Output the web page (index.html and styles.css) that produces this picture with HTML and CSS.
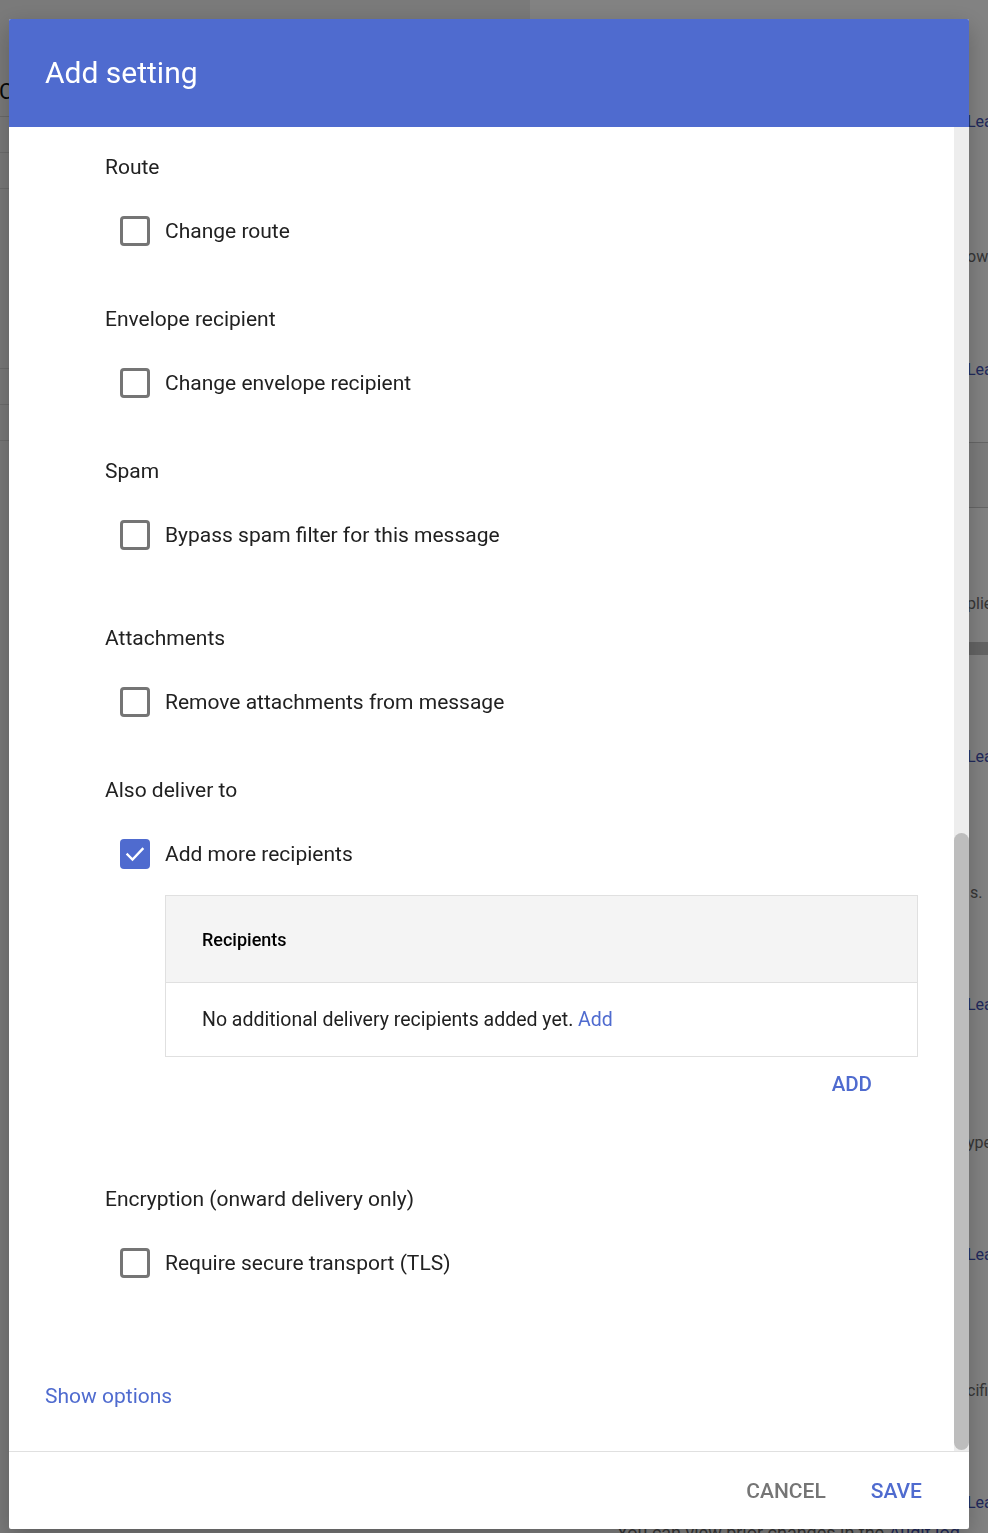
FILE: index.html
```html
<!DOCTYPE html>
<html lang="en">
<head>
<meta charset="utf-8">
<title>Add setting</title>
<link rel="stylesheet" href="styles.css">
</head>
<body>
<div class="page">
  <div class="page-left">
    <div class="page-left-head"><span class="page-left-title">Compliance</span></div>
    <div class="page-left-row"></div>
    <div class="page-left-row"></div>
    <div class="page-left-row tall"></div>
    <div class="page-left-row"></div>
    <div class="page-left-row"></div>
  </div>
  <div class="page-right">
    <span class="bg-text link m112">Learn more</span>
    <span class="bg-text m115">owed</span>
    <span class="bg-text link m93">Learn more</span>
    <div class="bg-band"></div>
    <span class="bg-text m86">plies</span>
    <div class="bg-bar"></div>
    <span class="bg-text link m92">Learn more</span>
    <span class="bg-text m116 shift">s.</span>
    <span class="bg-text link m92">Learn more</span>
    <span class="bg-text m118">ype</span>
    <span class="bg-text link m92">Learn more</span>
    <span class="bg-text m116">cific</span>
    <span class="bg-text link m92">Learn more</span>
  </div>
  <div class="page-foot">You can view prior changes in the <span class="bg-link">Audit log</span></div>
</div>

<div class="scrim"></div>

<div class="dialog" role="dialog" aria-labelledby="dlg-title">
  <header class="dialog-head">
    <h1 id="dlg-title" class="dialog-title">Add setting</h1>
  </header>

  <div class="dialog-body">
    <div class="dialog-content">
      <section class="group">
        <div class="group-label">Route</div>
        <label class="check-row">
          <span class="box"></span>
          <span class="check-text">Change route</span>
        </label>
      </section>

      <section class="group">
        <div class="group-label">Envelope recipient</div>
        <label class="check-row">
          <span class="box"></span>
          <span class="check-text">Change envelope recipient</span>
        </label>
      </section>

      <section class="group group-wide">
        <div class="group-label">Spam</div>
        <label class="check-row">
          <span class="box"></span>
          <span class="check-text">Bypass spam filter for this message</span>
        </label>
      </section>

      <section class="group">
        <div class="group-label">Attachments</div>
        <label class="check-row">
          <span class="box"></span>
          <span class="check-text">Remove attachments from message</span>
        </label>
      </section>

      <section class="group group-deliver">
        <div class="group-label">Also deliver to</div>
        <label class="check-row">
          <span class="box checked">
            <svg viewBox="0 0 30 30" width="30" height="30" aria-hidden="true"><path d="M7.5 15.5l5 5 10-10.5" fill="none" stroke="#fff" stroke-width="2.4" stroke-linecap="square"/></svg>
          </span>
          <span class="check-text">Add more recipients</span>
        </label>
        <div class="recip-table">
          <div class="recip-head">Recipients</div>
          <div class="recip-body">No additional delivery recipients added yet. <a class="link-inline" href="#">Add</a></div>
        </div>
        <div class="add-row"><button class="text-btn" type="button">ADD</button></div>
      </section>

      <section class="group">
        <div class="group-label">Encryption (onward delivery only)</div>
        <label class="check-row">
          <span class="box"></span>
          <span class="check-text">Require secure transport (TLS)</span>
        </label>
      </section>

      <a class="show-options" href="#">Show options</a>
    </div>
    <div class="scrollbar"><div class="thumb"></div></div>
  </div>

  <footer class="dialog-foot">
    <button class="foot-btn cancel" type="button">CANCEL</button>
    <button class="foot-btn save" type="button">SAVE</button>
  </footer>
</div>
</body>
</html>
```

FILE: styles.css
```css
* { box-sizing: border-box; }

html, body {
  margin: 0;
  padding: 0;
  height: 100%;
  overflow: hidden;
}

body {
  font-family: Roboto, "Liberation Sans", Arial, sans-serif;
  color: #212121;
  background: #ffffff;
}

/* ---------- background page (dimmed) ---------- */
.page {
  display: flex;
  height: 1533px;
  position: relative;
}

.page-left {
  flex: 0 0 530px;
  background: #efefef;
  display: flex;
  flex-direction: column;
}

.page-left-head {
  height: 117px;
  display: flex;
  align-items: center;
  padding-top: 67px;
  border-bottom: 1px solid #cfcfcf;
}

.page-left-title {
  font-size: 22px;
  color: #111;
  margin-left: -1px;
}

.page-left-row {
  height: 36px;
  border-bottom: 1px solid #d6d6d6;
}
.page-left-row.tall { height: 180px; }

.page-right {
  flex: 1;
  min-width: 0;
  overflow: hidden;
  display: flex;
  flex-direction: column;
  padding-left: 437px;
  background: #ffffff;
}

.bg-text {
  display: block;
  height: 20px;
  line-height: 20px;
  font-size: 16px;
  color: #6a6a6a;
  white-space: nowrap;
}
.bg-text.link { color: #3f51b5; }
.bg-text.shift { padding-left: 3px; }

.m112 { margin-top: 112px; }
.m115 { margin-top: 115px; }
.m93 { margin-top: 93px; }
.m86 { margin-top: 86px; }
.m92 { margin-top: 92px; }
.m116 { margin-top: 116px; }
.m118 { margin-top: 118px; }

.bg-band {
  margin-top: 62px;
  height: 66px;
  border-top: 1px solid #c8c8c8;
  border-bottom: 1px solid #c8c8c8;
  background: #f3f3f3;
}

.bg-bar {
  margin-top: 28px;
  height: 13px;
  background: #c4c4c4;
}

.page-foot {
  position: absolute;
  left: 617px;
  top: 1522px;
  font-size: 18px;
  color: #6a6a6a;
  white-space: nowrap;
}
.bg-link { color: #3f51b5; }

/* ---------- scrim + dialog ---------- */
.scrim {
  position: fixed;
  inset: 0;
  background: rgba(0, 0, 0, 0.49);
}

.dialog {
  position: fixed;
  left: 9px;
  top: 19px;
  width: 960px;
  height: 1510px;
  background: #ffffff;
  border-radius: 2px;
  box-shadow: 0 8px 24px rgba(0, 0, 0, 0.25);
  display: flex;
  flex-direction: column;
  overflow: hidden;
}

.dialog-head {
  flex: 0 0 108px;
  background: #4f6bcf;
  display: flex;
  align-items: center;
  padding-left: 36px;
  padding-bottom: 2px;
}

.dialog-title {
  margin: 0;
  font-size: 30px;
  font-weight: 400;
  color: #ffffff;
}

.dialog-body {
  flex: 1;
  display: flex;
  min-height: 0;
}

.dialog-content {
  flex: 1;
  padding: 28px 36px 0 36px;
  display: flex;
  flex-direction: column;
  align-items: stretch;
}

.scrollbar {
  width: 15px;
  background: #ededed;
  display: flex;
  flex-direction: column;
  justify-content: flex-end;
}

.thumb {
  height: 617px;
  margin-bottom: 1px;
  background: #bdbdbd;
  border-radius: 8px;
}

/* groups */
.group {
  padding-left: 60px;
  margin-bottom: 61px;
}
.group-wide { margin-bottom: 76px; }
.group-deliver { margin-bottom: 85px; }

.group-label {
  font-size: 21px;
  line-height: 24px;
  height: 24px;
  color: #212121;
  margin-bottom: 37px;
}

.check-row {
  display: flex;
  align-items: center;
  gap: 15px;
  padding-left: 15px;
  height: 30px;
  cursor: pointer;
}

.box {
  width: 30px;
  height: 30px;
  flex: 0 0 30px;
  border: 3px solid #757575;
  border-radius: 4px;
  display: flex;
  align-items: center;
  justify-content: center;
}

.box.checked {
  border: none;
  background: #4f6bcf;
}

.check-text {
  font-size: 21px;
  line-height: 24px;
  color: #212121;
}

/* recipients table */
.recip-table {
  margin-top: 26px;
  margin-left: 60px;
  border: 1px solid #e0e0e0;
}

.recip-head {
  height: 87px;
  background: #f4f4f4;
  border-bottom: 1px solid #e0e0e0;
  display: flex;
  align-items: center;
  padding-left: 36px;
  font-size: 18px;
  font-weight: 500;
  color: #000000;
}

.recip-body {
  height: 73px;
  display: flex;
  align-items: center;
  padding-left: 36px;
  font-size: 19.5px;
  color: #212121;
  white-space: pre;
}

.link-inline {
  color: #4f6bcf;
  text-decoration: none;
}

.add-row {
  display: flex;
  justify-content: flex-end;
  padding-right: 30px;
  margin-top: 9px;
}

.text-btn {
  font-family: inherit;
  background: none;
  border: none;
  height: 36px;
  padding: 0 16px;
  font-size: 20.5px;
  font-weight: 500;
  color: #4f6bcf;
  cursor: pointer;
}

.show-options {
  margin-top: 45px;
  align-self: flex-start;
  font-size: 21px;
  line-height: 24px;
  color: #4f6bcf;
  text-decoration: none;
}

/* footer */
.dialog-foot {
  flex: 0 0 78px;
  border-top: 1px solid #e0e0e0;
  display: flex;
  align-items: center;
  justify-content: flex-end;
  gap: 21px;
  padding-right: 35px;
}

.foot-btn {
  font-family: inherit;
  background: none;
  border: none;
  padding: 0 12px;
  height: 40px;
  font-size: 21px;
  font-weight: 500;
  cursor: pointer;
}
.foot-btn.cancel { color: #757575; }
.foot-btn.save { color: #4f6bcf; }
```
